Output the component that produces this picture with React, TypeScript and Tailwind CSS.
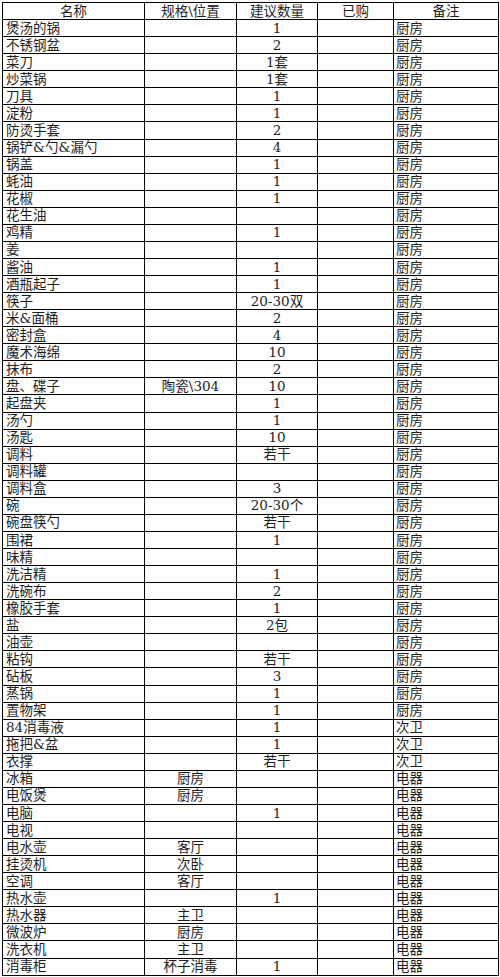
const rows: [string, string, string, string][] = [
  ["煲汤的锅", "", "1", "厨房"],
  ["不锈钢盆", "", "2", "厨房"],
  ["菜刀", "", "1套", "厨房"],
  ["炒菜锅", "", "1套", "厨房"],
  ["刀具", "", "1", "厨房"],
  ["淀粉", "", "1", "厨房"],
  ["防烫手套", "", "2", "厨房"],
  ["锅铲&勺&漏勺", "", "4", "厨房"],
  ["锅盖", "", "1", "厨房"],
  ["蚝油", "", "1", "厨房"],
  ["花椒", "", "1", "厨房"],
  ["花生油", "", "", "厨房"],
  ["鸡精", "", "1", "厨房"],
  ["姜", "", "", "厨房"],
  ["酱油", "", "1", "厨房"],
  ["酒瓶起子", "", "1", "厨房"],
  ["筷子", "", "20-30双", "厨房"],
  ["米&面桶", "", "2", "厨房"],
  ["密封盒", "", "4", "厨房"],
  ["魔术海绵", "", "10", "厨房"],
  ["抹布", "", "2", "厨房"],
  ["盘、碟子", "陶瓷\\304", "10", "厨房"],
  ["起盘夹", "", "1", "厨房"],
  ["汤勺", "", "1", "厨房"],
  ["汤匙", "", "10", "厨房"],
  ["调料", "", "若干", "厨房"],
  ["调料罐", "", "", "厨房"],
  ["调料盒", "", "3", "厨房"],
  ["碗", "", "20-30个", "厨房"],
  ["碗盘筷勺", "", "若干", "厨房"],
  ["围裙", "", "1", "厨房"],
  ["味精", "", "", "厨房"],
  ["洗洁精", "", "1", "厨房"],
  ["洗碗布", "", "2", "厨房"],
  ["橡胶手套", "", "1", "厨房"],
  ["盐", "", "2包", "厨房"],
  ["油壶", "", "", "厨房"],
  ["粘钩", "", "若干", "厨房"],
  ["砧板", "", "3", "厨房"],
  ["蒸锅", "", "1", "厨房"],
  ["置物架", "", "1", "厨房"],
  ["84消毒液", "", "1", "次卫"],
  ["拖把&盆", "", "1", "次卫"],
  ["衣撑", "", "若干", "次卫"],
  ["冰箱", "厨房", "", "电器"],
  ["电饭煲", "厨房", "", "电器"],
  ["电脑", "", "1", "电器"],
  ["电视", "", "", "电器"],
  ["电水壶", "客厅", "", "电器"],
  ["挂烫机", "次卧", "", "电器"],
  ["空调", "客厅", "", "电器"],
  ["热水壶", "", "1", "电器"],
  ["热水器", "主卫", "", "电器"],
  ["微波炉", "厨房", "", "电器"],
  ["洗衣机", "主卫", "", "电器"],
  ["消毒柜", "杯子消毒", "1", "电器"],
];

const cell = "border-r border-b border-black flex items-end pb-[1px] leading-none overflow-hidden whitespace-nowrap";

function Row({ a, b, c, d, e, head }: { a: string; b: string; c: string; d: string; e: string; head?: boolean }) {
  return (
    <div className="grid grid-cols-[142px_92px_81px_76px_105px] h-[17.07px]">
      <div className={`${cell} ${head ? "justify-center" : "pl-[3px]"}`}>{a}</div>
      <div className={`${cell} justify-center`}>{b}</div>
      <div className={`${cell} justify-center`}>{c}</div>
      <div className={`${cell} justify-center`}>{d}</div>
      <div className={`${cell} ${head ? "justify-center" : "pl-[2px]"}`}>{e}</div>
    </div>
  );
}

export default function App() {
  return (
    <div className="w-[500px] h-[977px] bg-white pt-[2px] pl-[2px] text-[13.5px] text-[#1e1e1e] font-['DejaVu_Serif','Noto_Sans_CJK_SC',serif]">
      <div className="w-fit border-l border-t border-black">
        <Row a="名称" b="规格\位置" c="建议数量" d="已购" e="备注" head />
        {rows.map((r, i) => (
          <Row key={i} a={r[0]} b={r[1]} c={r[2]} d="" e={r[3]} />
        ))}
      </div>
    </div>
  );
}
